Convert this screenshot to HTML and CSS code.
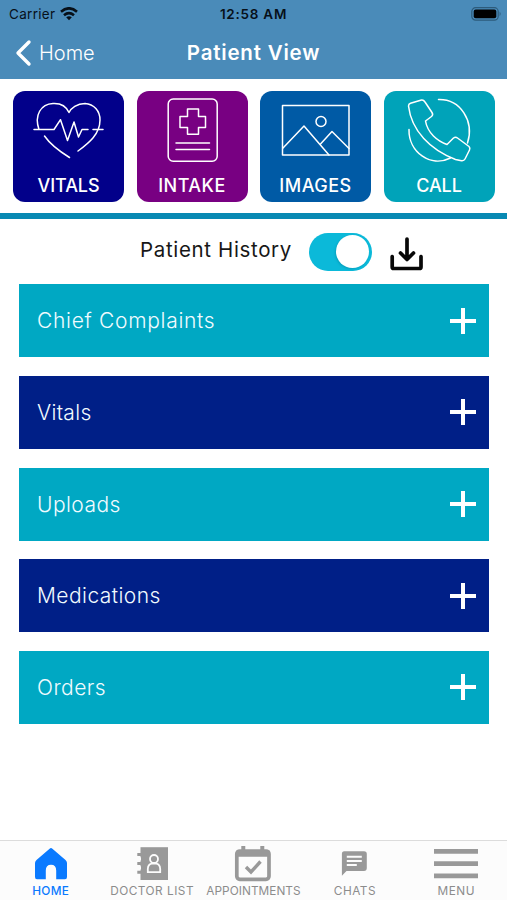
FILE: index.html
```html
<!DOCTYPE html>
<html lang="en">
<head>
<meta charset="utf-8">
<title>Patient View</title>
<link rel="stylesheet" href="styles.css">
</head>
<body>
<div class="app">
  <header class="header">
    <div class="status">
      <div class="carrier"><span>Carrier</span>
        <svg width="18" height="14" viewBox="0 0 18 14" fill="none" stroke="#071019" stroke-width="2.6"><path d="M1 4.7Q9-2.1 17 4.7M4 8.2Q9 4 14 8.2"/><path d="M6.2 10.3Q9 8.1 11.8 10.3L9 13.3Z" fill="#071019" stroke="none"/></svg>
      </div>
      <time class="clock">12:58 AM</time>
      <svg class="battery" width="31" height="14" viewBox="0 0 31 14"><rect x=".8" y=".7" width="26.4" height="12.4" rx="3.8" fill="none" stroke="#2d5b7b" stroke-width="1.2"/><rect x="2.7" y="2.5" width="22.6" height="8.8" rx="2" fill="#000"/><path d="M28.6 4.6q2 2.3 0 4.6z" fill="#2d5b7b"/></svg>
    </div>
    <div class="titlebar">
      <a class="back"><svg width="17" height="28" viewBox="0 0 17 28" fill="none" stroke="#fff" stroke-width="3.4" stroke-linecap="round" stroke-linejoin="round"><path d="M14 3 3 14 14 25"/></svg><span>Home</span></a>
      <h1>Patient View</h1>
      <span></span>
    </div>
  </header>
  <section class="tiles">
    <a class="tile vitals">
      <svg viewBox="13 91 111 75"><path d="M39 129.5C34 115 41 104 53 103.5C62 103 67 108 69 112.5C71 108 77 103.5 85 103.5C94 104 100 111 100 120C100 134 89 143 78 151M44.5 136C50 144 59 151 69.5 157.5M34 129.5H54L60.5 119.7L67.5 140.5L74 122L78.5 137L82 129.5H88M93 129.5H103"/></svg>
      <span>VITALS</span>
    </a>
    <a class="tile intake">
      <svg viewBox="136.5 91 111 75"><rect x="167.7" y="99" width="49" height="62.3" rx="5"/><path d="M187 109H198V116.5H205V127.5H198V134.3H187V127.5H179.5V116.5H187ZM175.5 143H209M175.5 149.5H209"/></svg>
      <span>INTAKE</span>
    </a>
    <a class="tile images">
      <svg viewBox="260 91 111 75"><rect x="282.5" y="105.5" width="66.5" height="49.5"/><circle cx="321" cy="121.5" r="5"/><path d="M283 148 304 126 329 155M320.5 144 332 131.5 349 148.5"/></svg>
      <span>IMAGES</span>
    </a>
    <a class="tile call">
      <svg viewBox="383.5 91 111 75"><path d="M408 106Q408 104 410 103.3L421 100Q423 99.6 424.5 102L431.5 112.5Q433 115 431 116.5L425 121C427 133 437 141 446.5 144.5L453 138Q455 136.5 457 138L468.5 146.5Q470 148 469 150L464.5 159Q463.5 161 461 160.7L455 159.5C430 150 411 131 408 106ZM438 99.5C460 99 474 121 467 143M408.5 129.5C408 152 430 168 450 158"/></svg>
      <span>CALL</span>
    </a>
  </section>
  <div class="history">
    <span class="history-label">Patient History</span>
    <span class="switch"><i></i></span>
    <svg width="34" height="34" viewBox="0 0 34 34" fill="none" stroke="#080808" stroke-width="3.7" stroke-linecap="round" stroke-linejoin="round"><path d="M2.2 19.5V30Q2.2 31.5 3.7 31.5H29.5Q31 31.5 31 30V19.5M17 2V22M10.5 16 17 22.5 23.5 16"/></svg>
  </div>
  <main class="list">
    <div class="row"><span class="wide">Chief Complaints</span><i class="plus"></i></div>
    <div class="row"><span class="narrow">Vitals</span><i class="plus"></i></div>
    <div class="row"><span>Uploads</span><i class="plus"></i></div>
    <div class="row"><span>Medications</span><i class="plus"></i></div>
    <div class="row"><span>Orders</span><i class="plus"></i></div>
  </main>
  <nav class="tabs">
    <a class="tab active"><svg width="40" height="40" viewBox="0 0 40 40" fill="#0a7aff"><path d="M18.6 4.8Q20 3.4 21.4 4.8L34.5 16Q36 17.3 36 19V33Q36 35.3 34 35.3H25.2V26.5Q25.2 20.7 20 20.7T14.8 26.5V35.3H6Q4 35.3 4 33V19Q4 17.3 5.5 16Z"/></svg><span>HOME</span></a>
    <a class="tab"><svg width="40" height="40" viewBox="0 0 40 40"><path d="M8.5 3.2H36V36H8.5Z" fill="#999"/><path d="M5.3 10.4H10M5.3 19.5H10M5.3 28.3H10" stroke="#999" stroke-width="3"/><path d="M8.5 13.3v3.2M8.5 22.3v3.2" stroke="#fcfcfc" stroke-width="1"/><g fill="none" stroke="#fcfcfc" stroke-width="1.8"><circle cx="22" cy="15" r="4"/><path d="M15.8 28.2V25Q16 20.2 19.5 19.6H24.5Q28 20.2 28.2 25V28.2Z"/></g></svg><span>DOCTOR LIST</span></a>
    <a class="tab"><svg width="40" height="40" viewBox="0 0 40 40" fill="none" stroke="#999"><rect x="3.8" y="7" width="32.2" height="28.3" rx="3" stroke-width="3.7"/><path d="M3 9.8H37" stroke-width="6"/><path d="M10.3 2V8M29.3 2V8" stroke-width="4"/><path d="M13 23 18 28 27.5 17.5" stroke-width="3.4"/></svg><span class="appointments">APPOINTMENTS</span></a>
    <a class="tab"><svg width="40" height="40" viewBox="0 0 40 40"><path d="M9.2 7.3H29Q31.8 7.3 31.8 10V24Q31.8 27 29 27H11.5L6.9 31.7V10Q6.9 7.3 9.2 7.3Z" fill="#999"/><path d="M11.8 12.8H26.8M11.8 16.9H26.8M11.8 21H21.8" stroke="#fcfcfc" stroke-width="2"/></svg><span>CHATS</span></a>
    <a class="tab"><svg width="46" height="40" viewBox="0 0 46 40" stroke="#999" stroke-width="4.8"><path d="M1 7.4H45M1 19.6H45M1 31.8H45"/></svg><span>MENU</span></a>
  </nav>
</div>
</body>
</html>
```

FILE: styles.css
```css
* { box-sizing: border-box; }
body { margin: 0; background: #fff; font-family: Inter, "Liberation Sans", sans-serif; }
.app { width: 507px; height: 900px; display: flex; flex-direction: column; overflow: hidden; }
.header { height: 79px; background: #4a8bb9; flex: none; }
.status { height: 27px; display: grid; grid-template-columns: 1fr auto 1fr; align-items: center; padding: 0 5px 0 9px; color: #071019; font-size: 13.5px; letter-spacing: .3px; }
.carrier { display: flex; align-items: center; gap: 5px; }
.clock { font-weight: 600; padding-right: 4px; letter-spacing: .75px; }
.battery { justify-self: end; }
.titlebar { height: 51px; display: grid; grid-template-columns: 1fr auto 1fr; align-items: center; color: #fff; padding: 0 15px; }
.back { display: flex; align-items: center; gap: 7px; font-size: 20px; font-weight: 300; }
h1 { margin: 0; font-size: 20.5px; font-weight: 600; letter-spacing: .8px; }
.tiles { height: 140px; padding: 12.4px 12.5px 0 13px; display: grid; grid-template-columns: repeat(4, 111px); justify-content: space-between; border-bottom: 6px solid #0889b3; flex: none; }
.tile { height: 111px; border-radius: 12px; color: #fff; display: flex; flex-direction: column; align-items: center; font-size: 18px; font-weight: 500; letter-spacing: .5px; }
.tile svg { width: 111px; height: 75px; fill: none; stroke: #fff; stroke-width: 1.5; stroke-linecap: round; stroke-linejoin: round; }
.tile span { line-height: 22px; margin-top: 9px; }
.vitals { background: #02008a; }
.intake { background: #780082; }
.images { background: #005aa5; }
.call { background: #00a3b9; }
.vitals span, .call span { letter-spacing: -.1px; }
.history { height: 65.4px; padding: 2px 0 0 140px; display: flex; align-items: center; flex: none; }
.history-label { width: 169px; font-size: 20.5px; letter-spacing: .65px; font-weight: 400; color: #171717; padding-bottom: 6px; white-space: nowrap; }
.switch { width: 63px; height: 38px; border-radius: 19px; background: #0bb9d9; display: flex; align-items: center; justify-content: flex-end; padding-right: 3px; margin: 0 18px 2px 0; }
.switch i { width: 33px; height: 33px; border-radius: 50%; background: #fff; box-shadow: -1px 1px 2px #087f9b66; }
.history svg { margin-top: 3px; }
.list { display: flex; flex-direction: column; gap: 18.6px; padding: 0 18.5px 0 19px; }
.row { height: 73px; background: #00a8c3; display: flex; align-items: center; justify-content: space-between; padding: 0 13px 0 18px; color: #f0fbff; font-size: 21px; font-weight: 300; letter-spacing: .45px; }
.row:nth-child(even) { background: #001f87; }
.wide { letter-spacing: .7px; }
.narrow { letter-spacing: .3px; }
.plus { width: 26px; height: 26px; background: linear-gradient(#fff, #fff) center / 26px 4px no-repeat, linear-gradient(#fff, #fff) center / 4px 26px no-repeat; }
.tabs { margin-top: auto; height: 60px; flex: none; border-top: 1px solid #dcdcdc; background: #fcfcfc; display: grid; grid-template-columns: repeat(5, 1fr); padding-top: 3px; }
.tab { display: flex; flex-direction: column; align-items: center; color: #8c8c8c; font-size: 11.8px; font-weight: 400; letter-spacing: .5px; white-space: nowrap; }
.tab span { line-height: 14px; }
.active { color: #0a7aff; font-weight: 500; letter-spacing: .3px; }
.tab .appointments { letter-spacing: .05px; }
```
